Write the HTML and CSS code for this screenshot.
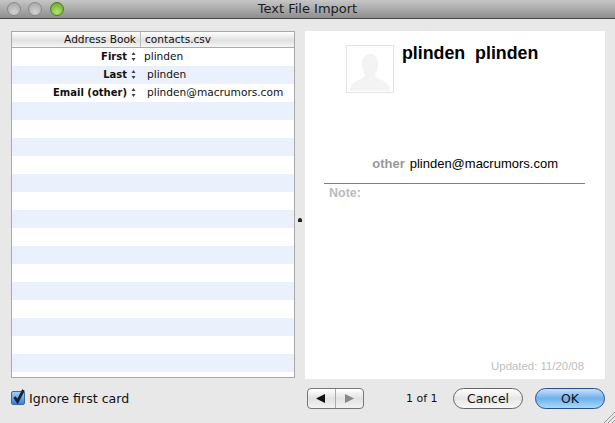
FILE: index.html
```html
<!DOCTYPE html>
<html lang="en">
<head>
    <meta charset="UTF-8">
    <title>Text File Import</title>
    <link rel="stylesheet" href="styles.css">
</head>
<body>
    <div class="window">
        <div class="titlebar">
            <div class="lights">
                <span class="light"></span>
                <span class="light"></span>
                <span class="light green"></span>
            </div>
            <div class="title">Text File Import</div>
        </div>

        <div class="main">
            <div class="table">
                <div class="thead">
                    <div class="th-left">Address Book</div>
                    <div class="th-right">contacts.csv</div>
                </div>
                <div class="rows">
                    <div class="row">
                        <div class="field">First</div>
                        <svg class="updown" width="7" height="12" viewBox="0 0 7 12"><path d="M3.5 2 5.5 5h-4zM3.5 11 1.5 8h4z"/></svg>
                        <div class="value first">plinden</div>
                    </div>
                    <div class="row">
                        <div class="field">Last</div>
                        <svg class="updown" width="7" height="12" viewBox="0 0 7 12"><path d="M3.5 2 5.5 5h-4zM3.5 11 1.5 8h4z"/></svg>
                        <div class="value">plinden</div>
                    </div>
                    <div class="row">
                        <div class="field">Email (other)</div>
                        <svg class="updown" width="7" height="12" viewBox="0 0 7 12"><path d="M3.5 2 5.5 5h-4zM3.5 11 1.5 8h4z"/></svg>
                        <div class="value">plinden@macrumors.com</div>
                    </div>
                    <div class="row"></div><div class="row"></div><div class="row"></div>
                    <div class="row"></div><div class="row"></div><div class="row"></div>
                    <div class="row"></div><div class="row"></div><div class="row"></div>
                    <div class="row"></div><div class="row"></div><div class="row"></div>
                    <div class="row"></div><div class="row"></div><div class="row"></div>
                </div>
            </div>

            <div class="splitter"><span class="grip"></span></div>

            <div class="card">
                <div class="card-head">
                    <div class="photo">
                        <svg width="46" height="46" viewBox="0 0 46 46"><path fill="#f3f3f3" d="M3 45c0-7 5-10 11-12 3-1 4-3 4-5-2-2-3-6-3-10 0-6 3-10 8-10s8 4 8 10c0 4-1 8-3 10 0 2 1 4 4 5 6 2 11 5 11 12z"/></svg>
                    </div>
                    <div class="name">plinden&nbsp; plinden</div>
                </div>
                <div class="email-line">
                    <span class="email-label">other</span>
                    <span class="email">plinden@macrumors.com</span>
                </div>
                <div class="note">Note:</div>
                <div class="updated">Updated: 11/20/08</div>
            </div>
        </div>

        <div class="footer">
            <label class="check">
                <span class="checkbox">
                    <svg class="tick" width="15" height="17" viewBox="0 0 15 17"><path d="M3.5 9l3 4.5L12.5 2" fill="none" stroke="#15233c" stroke-width="2.8"/></svg>
                </span>
                Ignore first card
            </label>
            <div class="actions">
                <div class="pager">
                    <div class="pager-btn"><svg width="11" height="9" viewBox="0 0 11 9"><path fill="#111" d="M0 4.5 9 0v9z"/></svg></div>
                    <div class="pager-btn"><svg width="11" height="9" viewBox="0 0 11 9"><path fill="#888" d="M10 4.5 1 0v9z"/></svg></div>
                </div>
                <div class="count">1 of 1</div>
                <button class="btn" type="button">Cancel</button>
                <button class="btn default" type="button">OK</button>
            </div>
        </div>
        <svg class="resize" width="11" height="11" viewBox="0 0 11 11"><path d="M0 11 11 0M4 11l7-7M8 11l3-3" stroke="#999" fill="none"/></svg>
    </div>
</body>
</html>
```

FILE: styles.css
```css
/* Basic reset */
* {
    margin: 0;
    padding: 0;
    box-sizing: border-box;
}

body {
    font-family: "DejaVu Sans", sans-serif;
    font-size: 10.6px;
    color: #111;
    background-color: #e8e8e8;
    overflow: hidden;
}

.window {
    position: relative;
    width: 615px;
    height: 423px;
}

/* Title bar */
.titlebar {
    display: flex;
    align-items: center;
    position: relative;
    height: 19px;
    background: linear-gradient(#c6c6c6, #8e8e8e);
    border-bottom: 1px solid #454545;
}

.lights {
    display: flex;
    gap: 7px;
    padding-left: 7px;
}

.light {
    width: 14px;
    height: 14px;
    border-radius: 50%;
    border: 1px solid #8a8a8a;
    background: radial-gradient(circle at 50% 75%, #d2d2d2, #a2a2a2);
}

.light.green {
    margin-left: 1px;
    border-color: #4f7d24;
    background: radial-gradient(circle at 50% 75%, #b6e868, #5c9c2a);
}

.title {
    position: absolute;
    left: 0;
    right: 0;
    top: 1px;
    text-align: center;
    font-size: 13px;
    line-height: 16px;
    color: #1c1c1c;
}

/* Main area */
.main {
    display: flex;
    padding: 12px 10px 0 11px;
    height: 364px;
}

.table {
    width: 284px;
    height: 347px;
    background-color: #fff;
    border: 1px solid #a9a9a9;
    overflow: hidden;
}

.thead {
    display: flex;
    height: 16px;
    line-height: 15px;
    background: linear-gradient(#fff, #e0e0e0 55%, #f6f6f6);
    border-bottom: 1px solid #aaa;
}

.th-left {
    width: 129px;
    padding-right: 4px;
    text-align: right;
    border-right: 1px solid #bbb;
}

.th-right {
    padding-left: 4px;
}

.row {
    display: flex;
    align-items: center;
    height: 18px;
    padding-bottom: 2px;
}

.row:nth-child(even) {
    background-color: #ebf1fc;
}

.field {
    width: 115px;
    text-align: right;
    font-weight: bold;
    font-size: 10px;
}

.updown {
    margin-left: 3px;
    margin-right: 1px;
    fill: #444;
}

.value {
    margin-left: 9px;
}

.value.first {
    margin-left: 6px;
}

.splitter {
    width: 10px;
    display: flex;
    justify-content: center;
    padding-top: 187px;
}

.grip {
    width: 4px;
    height: 4px;
    border-radius: 2px 2px 0 0;
    background-color: #222;
}

/* Contact card */
.card {
    position: relative;
    width: 300px;
    height: 348px;
    background-color: #fff;
    font-family: "Liberation Sans", Arial, sans-serif;
    font-size: 13px;
}

.card-head {
    display: flex;
    gap: 8px;
    padding: 14px 0 0 41px;
}

.photo {
    display: flex;
    align-items: flex-end;
    width: 48px;
    height: 48px;
    border: 1px solid #e4e4e4;
}

.name {
    font-size: 17.8px;
    font-weight: bold;
    line-height: 16px;
    color: #000;
}

.email-line {
    display: flex;
    justify-content: flex-end;
    gap: 5px;
    margin-top: 63px;
    padding-right: 47px;
    line-height: 16px;
}

.email-label {
    font-weight: bold;
    color: #999;
}

.email {
    color: #000;
}

.note {
    margin: 11px 20px 0 19px;
    padding: 2px 0 0 5px;
    border-top: 1px solid #808080;
    font-weight: bold;
    font-size: 12.5px;
    color: #bbb;
}

.updated {
    position: absolute;
    right: 21px;
    bottom: 7px;
    font-size: 11.4px;
    color: #c0c0c0;
}

/* Footer */
.footer {
    display: flex;
    justify-content: space-between;
    align-items: center;
    height: 30px;
    padding: 0 10px 0 11px;
}

.check {
    display: flex;
    align-items: center;
    gap: 4px;
    font-size: 12.6px;
}

.checkbox {
    position: relative;
    width: 14px;
    height: 14px;
    border: 1px solid #3d6aa8;
    border-radius: 2px;
    background: linear-gradient(#a9c9ef, #3d80d6);
}

.tick {
    position: absolute;
    left: -1px;
    top: -4px;
}

.actions {
    display: flex;
    align-items: center;
    font-size: 11px;
}

.pager {
    display: flex;
    width: 57px;
    height: 21px;
    border: 1px solid #777;
    border-radius: 4px;
    background: linear-gradient(#fff, #e2e2e2 50%, #f2f2f2);
    overflow: hidden;
}

.pager-btn {
    flex: 1;
    display: flex;
    align-items: center;
    justify-content: center;
}

.pager-btn + .pager-btn {
    border-left: 1px solid #aaa;
}

.count {
    margin-left: 42px;
    width: 47px;
}

.btn {
    width: 70px;
    height: 21px;
    font-family: inherit;
    font-size: 12.4px;
    color: #111;
    border: 1px solid #666;
    border-radius: 11px;
    background: linear-gradient(#fff, #e6e6e6 50%, #f8f8f8);
}

.btn.default {
    margin-left: 12px;
    border-color: #2b4f8c;
    background: linear-gradient(#c8e0f8, #6fb0ee 50%, #a6dcfb);
}

.resize {
    position: absolute;
    right: 0;
    bottom: 0;
}
```
